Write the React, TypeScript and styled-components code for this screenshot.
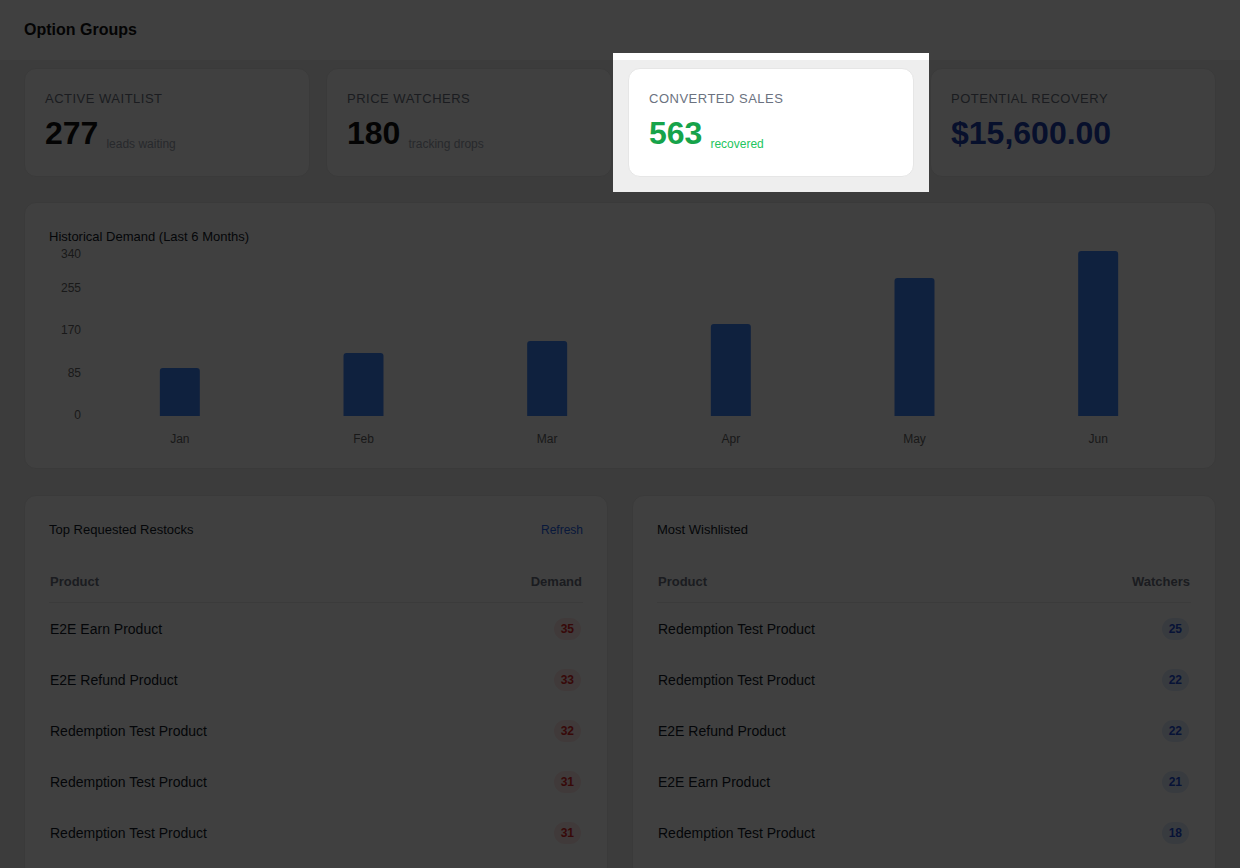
import React from 'react'
import styled, { createGlobalStyle } from 'styled-components'

const GlobalStyle = createGlobalStyle`
  html, body {
    margin: 0;
    padding: 0;
    background: #eeeeee;
    font-family: "Liberation Sans", Arial, Helvetica, sans-serif;
    color: #111827;
    overflow: hidden;
  }
`

const Page = styled.div`
  min-height: 868px;
`

const Header = styled.header`
  height: 60px;
  background: #ffffff;
  display: flex;
  align-items: center;
  padding: 0 24px;
`

const PageTitle = styled.h1`
  margin: 0;
  font-size: 16px;
  font-weight: 700;
  color: #111111;
`

const Main = styled.main`
  padding: 8px 24px 24px;
`

const StatsGrid = styled.div`
  display: grid;
  grid-template-columns: repeat(4, 1fr);
  gap: 16px;
`

const Card = styled.div`
  background: #ffffff;
  border: 1px solid #e6e6e6;
  border-radius: 12px;
`

const StatCard = styled(Card)`
  position: relative;
  padding: 22px 20px 24px;
`

// tour highlight: a transparent hole with a huge shadow dimming the rest of the page
const Spotlight = styled.div`
  position: absolute;
  inset: -16px;
  box-shadow: 0 0 0 9999px rgba(0, 0, 0, 0.75);
  pointer-events: none;
  z-index: 10;
`

const StatLabel = styled.div`
  font-size: 13px;
  line-height: 16px;
  letter-spacing: 0.5px;
  text-transform: uppercase;
  color: #6b7280;
`

const StatRow = styled.div`
  display: flex;
  align-items: flex-end;
  margin-top: 7px;
`

const StatValue = styled.span<{ $color: string }>`
  font-size: 32px;
  line-height: 38px;
  font-weight: 700;
  color: ${(p) => p.$color};
`

const StatSub = styled.span<{ $color: string }>`
  font-size: 12px;
  line-height: 14px;
  margin-left: 8px;
  margin-bottom: 1px;
  color: ${(p) => p.$color};
`

const ChartCard = styled(Card)`
  margin-top: 25px;
  padding: 26px 24px 22px;
`

const CardTitle = styled.div`
  font-size: 13px;
  line-height: 16px;
  color: #111827;
`

const ChartSvg = styled.svg`
  display: block;
  margin-top: 1px;
  font-family: "Liberation Sans", Arial, sans-serif;
`

const BottomGrid = styled.div`
  display: grid;
  grid-template-columns: 1fr 1fr;
  gap: 24px;
  margin-top: 26px;
`

const TableCard = styled(Card)`
  padding: 26px 24px 20px;
`

const TableTop = styled.div`
  display: flex;
  justify-content: space-between;
  align-items: center;
`

const RefreshLink = styled.a`
  font-size: 12px;
  color: #2563eb;
  cursor: pointer;
`

const TableHead = styled.div`
  display: flex;
  justify-content: space-between;
  margin-top: 22px;
  padding: 14px 1px 12px;
  border-bottom: 1px solid #ececec;
  font-size: 13px;
  line-height: 16px;
  font-weight: 700;
  color: #6b7280;
`

const TableRow = styled.div`
  display: flex;
  justify-content: space-between;
  align-items: center;
  height: 51px;
  padding: 0 1px;
  font-size: 14px;
  color: #111827;
`

const Badge = styled.span<{ $tone: 'red' | 'blue' }>`
  display: inline-flex;
  align-items: center;
  justify-content: center;
  height: 22px;
  min-width: 13px;
  padding: 0 7px;
  margin-right: 1px;
  border-radius: 11px;
  font-size: 12px;
  font-weight: 700;
  background: ${(p) => (p.$tone === 'red' ? '#fde6e6' : '#e0eafc')};
  color: ${(p) => (p.$tone === 'red' ? '#dc2626' : '#1d4ed8')};
`

const stats = [
  { label: 'Active Waitlist', value: '277', sub: 'leads waiting', color: '#111111', subColor: '#9ca3af' },
  { label: 'Price Watchers', value: '180', sub: 'tracking drops', color: '#111111', subColor: '#9ca3af' },
  { label: 'Converted Sales', value: '563', sub: 'recovered', color: '#16a34a', subColor: '#22c55e', focus: true },
  { label: 'Potential Recovery', value: '$15,600.00', color: '#1e40af' },
]

const demand = [
  { month: 'Jan', value: 96 },
  { month: 'Feb', value: 126 },
  { month: 'Mar', value: 150 },
  { month: 'Apr', value: 184 },
  { month: 'May', value: 276 },
  { month: 'Jun', value: 330 },
]

const restocks = [
  { name: 'E2E Earn Product', count: 35 },
  { name: 'E2E Refund Product', count: 33 },
  { name: 'Redemption Test Product', count: 32 },
  { name: 'Redemption Test Product', count: 31 },
  { name: 'Redemption Test Product', count: 31 },
]

const wishlisted = [
  { name: 'Redemption Test Product', count: 25 },
  { name: 'Redemption Test Product', count: 22 },
  { name: 'E2E Refund Product', count: 22 },
  { name: 'E2E Earn Product', count: 21 },
  { name: 'Redemption Test Product', count: 18 },
]

const CHART_W = 1142
const CHART_H = 200
const PLOT_LEFT = 39
const PLOT_RIGHT = 1141
const ZERO_Y = 170
const MAX = 340

const DemandChart = () => {
  const slot = (PLOT_RIGHT - PLOT_LEFT) / demand.length
  const ticks = [0, 85, 170, 255, 340]
  const yFor = (v: number) => ZERO_Y - (v / MAX) * ZERO_Y
  return (
    <ChartSvg width={CHART_W} height={CHART_H} viewBox={`0 0 ${CHART_W} ${CHART_H}`}>
      {ticks.map((t) => (
        <text
          key={t}
          x={32}
          y={Math.max(yFor(t), 9)}
          textAnchor="end"
          dominantBaseline="middle"
          fontSize={12}
          fill="#666666"
        >
          {t}
        </text>
      ))}
      {demand.map((d, i) => {
        const cx = PLOT_LEFT + slot * i + slot / 2
        const top = yFor(d.value)
        const r = 3
        return (
          <g key={d.month}>
            <path
              d={`M${cx - 20},${ZERO_Y} V${top + r} Q${cx - 20},${top} ${cx - 20 + r},${top} H${cx + 20 - r} Q${cx + 20},${top} ${cx + 20},${top + r} V${ZERO_Y} Z`}
              fill="#3f82f6"
            />
            <text x={cx} y={194} textAnchor="middle" dominantBaseline="middle" fontSize={12} fill="#666666">
              {d.month}
            </text>
          </g>
        )
      })}
    </ChartSvg>
  )
}

const App = () => {
  return (
    <Page>
      <GlobalStyle />
      <Header>
        <PageTitle>Option Groups</PageTitle>
      </Header>
      <Main>
        <StatsGrid>
          {stats.map((s) => (
            <StatCard key={s.label}>
              {s.focus && <Spotlight />}
              <StatLabel>{s.label}</StatLabel>
              <StatRow>
                <StatValue $color={s.color}>{s.value}</StatValue>
                {s.sub && <StatSub $color={s.subColor || '#9ca3af'}>{s.sub}</StatSub>}
              </StatRow>
            </StatCard>
          ))}
        </StatsGrid>

        <ChartCard>
          <CardTitle>Historical Demand (Last 6 Months)</CardTitle>
          <DemandChart />
        </ChartCard>

        <BottomGrid>
          <TableCard>
            <TableTop>
              <CardTitle>Top Requested Restocks</CardTitle>
              <RefreshLink>Refresh</RefreshLink>
            </TableTop>
            <TableHead>
              <span>Product</span>
              <span>Demand</span>
            </TableHead>
            {restocks.map((r, i) => (
              <TableRow key={i}>
                <span>{r.name}</span>
                <Badge $tone="red">{r.count}</Badge>
              </TableRow>
            ))}
          </TableCard>
          <TableCard>
            <TableTop>
              <CardTitle>Most Wishlisted</CardTitle>
            </TableTop>
            <TableHead>
              <span>Product</span>
              <span>Watchers</span>
            </TableHead>
            {wishlisted.map((r, i) => (
              <TableRow key={i}>
                <span>{r.name}</span>
                <Badge $tone="blue">{r.count}</Badge>
              </TableRow>
            ))}
          </TableCard>
        </BottomGrid>
      </Main>
    </Page>
  )
}

export default App
